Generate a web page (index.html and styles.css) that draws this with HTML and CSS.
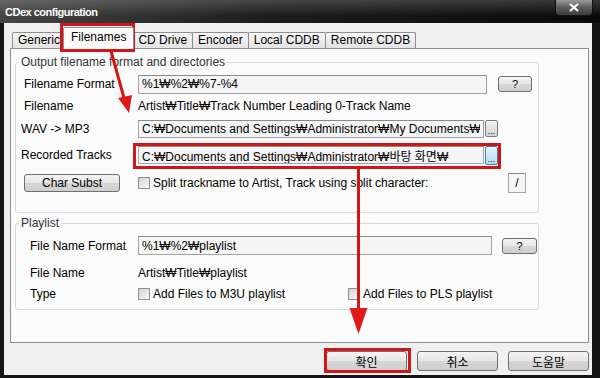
FILE: index.html
```html
<!DOCTYPE html>
<html lang="ko">
<head>
    <meta charset="UTF-8">
    <meta name="viewport" content="width=device-width, initial-scale=1.0">
    <title>CDex configuration</title>
    <link rel="stylesheet" href="styles.css">
</head>
<body>
<div class="window">
    <!-- Title bar -->
    <div class="titlebar">
        <span class="title">CDex configuration</span>
        <span class="close-btn">
            <svg width="12" height="9" viewBox="0 0 12 9"><path d="M2 1 L10 8 M10 1 L2 8" stroke="#fff" stroke-width="2.2" fill="none"/></svg>
        </span>
    </div>

    <div class="client">
        <!-- Tabs -->
        <div class="tabs">
            <div class="tab">Generic</div>
            <div class="tab active">Filenames</div>
            <div class="tab">CD Drive</div>
            <div class="tab">Encoder</div>
            <div class="tab">Local CDDB</div>
            <div class="tab">Remote CDDB</div>
        </div>

        <div class="panel">
            <!-- Output filename group -->
            <div class="group group-output">
                <span class="legend">Output filename format and directories</span>
                <div class="row row-1">
                    <span class="label">Filename Format</span>
                    <input class="field field-format" type="text" value="%1₩%2₩%7-%4" readonly>
                    <span class="btn help-btn">?</span>
                </div>
                <div class="row row-2">
                    <span class="label">Filename</span>
                    <span class="value">Artist₩Title₩Track Number Leading 0-Track Name</span>
                </div>
                <div class="row row-3">
                    <span class="label label-shift">WAV -&gt; MP3</span>
                    <input class="field field-path" type="text" value="C:₩Documents and Settings₩Administrator₩My Documents₩" readonly>
                    <span class="browse-btn">...</span>
                </div>
                <div class="row row-4">
                    <span class="label label-shift">Recorded Tracks</span>
                    <input class="field field-path" type="text" value="C:₩Documents and Settings₩Administrator₩바탕 화면₩" readonly>
                    <span class="browse-btn hot">...</span>
                </div>
                <div class="row row-5">
                    <span class="btn char-btn">Char Subst</span>
                    <span class="check check-split"></span>
                    <span class="check-text">Split trackname to Artist, Track using split character:</span>
                    <span class="split-char">/</span>
                </div>
            </div>

            <!-- Playlist group -->
            <div class="group group-playlist">
                <span class="legend">Playlist</span>
                <div class="row row-1">
                    <span class="label">File Name Format</span>
                    <input class="field field-playlist" type="text" value="%1₩%2₩playlist" readonly>
                    <span class="btn help-btn help-wide">?</span>
                </div>
                <div class="row row-2">
                    <span class="label">File Name</span>
                    <span class="value">Artist₩Title₩playlist</span>
                </div>
                <div class="row row-type">
                    <span class="label">Type</span>
                    <span class="option option-m3u">
                        <span class="check"></span>
                        <span class="check-text">Add Files to M3U playlist</span>
                    </span>
                    <span class="option">
                        <span class="check"></span>
                        <span class="check-text">Add Files to PLS playlist</span>
                    </span>
                </div>
            </div>
        </div>

        <!-- Dialog buttons -->
        <div class="dialog-buttons">
            <span class="btn dlg-btn">확인</span>
            <span class="btn dlg-btn">취소</span>
            <span class="btn dlg-btn">도움말</span>
        </div>
    </div>

    <!-- red annotation marks drawn over the screenshot -->
    <svg class="annot" width="600" height="378" viewBox="0 0 600 378">
        <g fill="none" stroke="#d01616" stroke-width="3">
            <rect x="61.5" y="24.5" width="72" height="26"/>
            <rect x="134.5" y="144.5" width="365" height="23"/>
            <rect x="325.5" y="349.5" width="84" height="22"/>
            <line x1="111" y1="51" x2="124" y2="98"/>
            <line x1="358.5" y1="168" x2="358.5" y2="312"/>
        </g>
        <g fill="#e01a1a">
            <polygon points="129,113 132,95 118,98"/>
            <polygon points="358.5,334 349.5,308 367.5,308"/>
        </g>
    </svg>
</div>
</body>
</html>
```

FILE: styles.css
```css
* {
    box-sizing: border-box;
}
body {
    margin: 0;
    background: #000;
    font-family: "Liberation Sans", Arial, "Noto Sans CJK KR", sans-serif;
    font-size: 12px;
    color: #000;
}
.window {
    position: relative;
    width: 600px;
    height: 378px;
    display: flex;
    flex-direction: column;
    background: #151515;
    overflow: hidden;
}

/* Title bar */
.titlebar {
    height: 23px;
    display: flex;
    justify-content: space-between;
    align-items: flex-start;
    background: linear-gradient(to bottom, rgba(255,255,255,0.18), rgba(255,255,255,0) 70%),
                linear-gradient(to right, #454545, #1c1c1c 45%, #0a0a0a);
}
.title {
    padding: 6px 0 0 5px;
    line-height: 13px;
    font-size: 11px;
    font-weight: bold;
    letter-spacing: -0.5px;
    color: #fff;
}
.close-btn {
    width: 38px;
    height: 16px;
    margin-right: 7px;
    display: flex;
    align-items: center;
    justify-content: center;
    border: 1px solid #111;
    border-top: 0;
    border-radius: 0 0 4px 4px;
    background: linear-gradient(to bottom, #9a9a9a, #5c5c5c 50%, #3e3e3e);
}

/* Client area */
.client {
    flex: 1;
    margin: 0 8px 3px 4px;
    padding: 4px 3px 0 6px;
    display: flex;
    flex-direction: column;
    background: #f0f0f0;
}
.tabs {
    height: 21px;
    margin-left: 2px;
    display: flex;
    align-items: flex-end;
}
.tab {
    height: 16px;
    padding: 0 5px;
    margin-right: -1px;
    line-height: 15px;
    white-space: nowrap;
    border: 1px solid #8e8f8f;
    border-bottom: 0;
    border-radius: 2px 2px 0 0;
    background: linear-gradient(to bottom, #f7f7f7, #e3e3e3);
}
.tab.active {
    position: relative;
    z-index: 1;
    height: 22px;
    margin: 0 -2px -1px -2px;
    padding: 0 7px;
    line-height: 19px;
    background: #fbfbfb;
}
.panel {
    height: 295px;
    padding: 13px 0 0 4px;
    border: 1px solid #8e8f8f;
    background: #fbfbfb;
}

/* Group boxes */
.group {
    position: relative;
    width: 524px;
    border: 1px solid #d5dadf;
    border-radius: 3px;
}
.group-output {
    height: 151px;
    padding: 10px 0 0 8px;
}
.group-playlist {
    height: 87px;
    margin-top: 10px;
    padding: 10px 0 0 14px;
}
.legend {
    position: absolute;
    top: -8px;
    left: 3px;
    padding: 0 2px;
    line-height: 15px;
    color: #333;
    background: #fbfbfb;
}
.row {
    display: flex;
    align-items: center;
}
.group-output .row-1 { height: 22px; }
.group-output .row-2 { height: 22px; }
.group-output .row-3 { height: 23px; }
.group-output .row-4 { height: 30px; }
.group-output .row-5 { height: 26px; }
.group-playlist .row-1 { height: 23px; }
.group-playlist .row-2 { height: 22px; margin-top: 5px; }
.group-playlist .row-type { height: 20px; }

.label {
    width: 114px;
    flex: none;
    white-space: nowrap;
}
.label-shift {
    width: 117px;
    margin-left: -3px;
}
.group-playlist .label {
    width: 108px;
}
.value {
    white-space: nowrap;
}

/* Inputs and buttons */
.field {
    flex: none;
    height: 19px;
    padding: 0 3px;
    margin: 0;
    font: inherit;
    color: #000;
    border: 1px solid #a3a3a3;
    border-top-color: #8a8a8a;
    background: #f5f5f5;
    outline: none;
}
.field-format { width: 349px; }
.field-path { width: 346px; height: 18px; }
.field-playlist { width: 354px; }

.btn {
    flex: none;
    display: flex;
    align-items: center;
    justify-content: center;
    border: 1px solid #707070;
    border-radius: 3px;
    background: linear-gradient(to bottom, #f4f4f4, #e6e6e6 48%, #d6d6d6 52%, #cfcfcf);
    white-space: nowrap;
}
.help-btn {
    width: 34px;
    height: 16px;
    margin-left: 11px;
    font-size: 11px;
}
.help-wide {
    width: 35px;
    margin-left: 10px;
}
.browse-btn {
    flex: none;
    width: 13px;
    height: 17px;
    margin-left: 1px;
    display: flex;
    align-items: flex-end;
    justify-content: center;
    font-size: 9px;
    line-height: 10px;
    border: 1px solid #7a7a7a;
    border-radius: 2px;
    background: linear-gradient(to bottom, #f2f2f2, #d4d4d4);
}
.browse-btn.hot {
    height: 19px;
    border-color: #3c7fb1;
    background: linear-gradient(to bottom, #e8f4fb, #b9dcf3);
}
.char-btn {
    width: 96px;
    height: 18px;
}
.check {
    width: 12px;
    height: 12px;
    flex: none;
    border: 1px solid #8e8f8f;
    background: linear-gradient(to bottom right, #d4d4d4, #f8f8f8);
}
.check-split {
    margin-left: 18px;
}
.check-text {
    margin-left: 3px;
    white-space: nowrap;
}
.split-char {
    flex: none;
    width: 18px;
    height: 20px;
    margin: 0 12px 0 auto;
    display: flex;
    align-items: center;
    justify-content: center;
    border: 1px solid #a3a3a3;
    border-top-color: #8a8a8a;
    background: #f5f5f5;
}
.option {
    flex: none;
    display: flex;
    align-items: center;
}
.option-m3u {
    width: 210px;
}

/* Dialog buttons */
.dialog-buttons {
    margin-top: 8px;
    display: flex;
    justify-content: flex-end;
    gap: 10px;
}
.dlg-btn {
    width: 81px;
    height: 20px;
    font-family: "Noto Sans CJK KR", sans-serif;
    font-size: 12px;
}

/* Annotation overlay */
.annot {
    position: absolute;
    left: 0;
    top: 0;
    pointer-events: none;
}
```
